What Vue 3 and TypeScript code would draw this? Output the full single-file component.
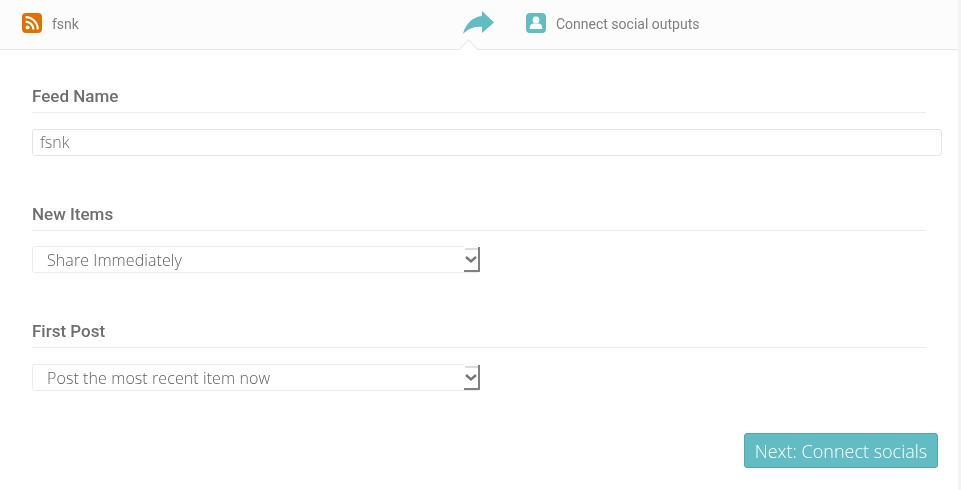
<script setup lang="ts">
import { ref } from 'vue'

const feedName = ref('fsnk')
const newItems = ref('Share Immediately')
const firstPost = ref('Post the most recent item now')
</script>

<template>
  <div class="page">
    <header class="steps">
      <div class="step step-source">
        <span class="badge badge-orange">
          <svg width="20" height="20" viewBox="0 0 20 20">
            <circle cx="5.6" cy="14.4" r="2" fill="#fff" />
            <path d="M3.6 8.600a7.800 7.800 0 0 1 7.800 7.800" fill="none" stroke="#fff" stroke-width="2.2" />
            <path d="M3.600 4.200a12.200 12.200 0 0 1 12.200 12.200" fill="none" stroke="#fff" stroke-width="2.2" />
          </svg>
        </span>
        <span class="step-text">fsnk</span>
      </div>
      <div class="arrow">
        <svg width="32" height="24" viewBox="0 0 32 24">
          <path d="M0 23C3 12 10 6 19 5V0l12 11.500L19 22v-6C11 15 5 18 0 23z" fill="#62bcc3" />
        </svg>
      </div>
      <div class="step step-target">
        <span class="badge badge-teal">
          <svg width="20" height="20" viewBox="0 0 20 20">
            <circle cx="10" cy="7" r="3.400" fill="#fff" />
            <path d="M3.800 16v-1.600c0-2.400 2-3.900 3.800-3.900h4.800c1.800 0 3.800 1.500 3.800 3.900V16z" fill="#fff" />
          </svg>
        </span>
        <span class="step-text">Connect social outputs</span>
      </div>
    </header>

    <main class="form">
      <section class="field field-name">
        <h3 class="label">Feed Name</h3>
        <input v-model="feedName" class="text-input" type="text" />
      </section>

      <section class="field field-items">
        <h3 class="label">New Items</h3>
        <div class="select">
          <span class="select-value">{{ newItems }}</span>
          <span class="select-arrow">
            <svg width="16" height="26" viewBox="0 0 16 26">
              <path d="M1 3h13" fill="none" stroke="#dcdcdc" stroke-width="2" />
              <path d="M0 25h15V1" fill="none" stroke="#808080" stroke-width="2" />
              <path d="M2 11l5 4.500 5-4.500" fill="none" stroke="#777" stroke-width="2.400" />
            </svg>
          </span>
        </div>
      </section>

      <section class="field field-post">
        <h3 class="label">First Post</h3>
        <div class="select">
          <span class="select-value">{{ firstPost }}</span>
          <span class="select-arrow">
            <svg width="16" height="26" viewBox="0 0 16 26">
              <path d="M1 3h13" fill="none" stroke="#dcdcdc" stroke-width="2" />
              <path d="M0 25h15V1" fill="none" stroke="#808080" stroke-width="2" />
              <path d="M2 11l5 4.500 5-4.500" fill="none" stroke="#777" stroke-width="2.400" />
            </svg>
          </span>
        </div>
      </section>

      <div class="actions">
        <button class="btn-next">Next: Connect socials</button>
      </div>
    </main>
  </div>
</template>

<style>
html, body {
  margin: 0;
  background: #fff;
  overflow: hidden;
}
</style>

<style scoped>
.page {
  width: 958px;
  height: 490px;
  border-right: 3px solid #f5f2f0;
  font-family: Roboto, sans-serif;
  color: #757575;
  will-change: transform;
}

.steps {
  position: relative;
  height: 49px;
  display: flex;
  align-items: center;
  background: #fcfcfc;
  border-bottom: 1px solid #e6e4e3;
}

.step {
  display: flex;
  align-items: center;
  gap: 10px;
  margin-bottom: 3px;
}

.step-source {
  margin-left: 22px;
  width: 441px;
}

.step-target {
  margin-left: 31px;
}

.arrow {
  display: flex;
  margin-top: -3px;
}

/* little notch sitting on the header's bottom border */
.arrow::after {
  content: '';
  position: absolute;
  left: 461px;
  top: 42px;
  width: 14px;
  height: 14px;
  background: #fff;
  border-left: 1px solid #e8e4e0;
  border-top: 1px solid #e8e4e0;
  transform: rotate(45deg) scale(0.95);
}

.badge {
  width: 20px;
  height: 20px;
  border-radius: 4px;
  display: block;
  overflow: hidden;
}

.badge svg {
  display: block;
}

.badge-orange {
  background: #e07000;
}

.badge-teal {
  background: #62bcc3;
}

.step-text {
  padding-top: 2px;
  font-size: 14px;
  color: #808080;
}

.form {
  padding: 35px 32px 0;
}

.label {
  margin: 0;
  width: 894px;
  height: 28px;
  box-sizing: border-box;
  border-bottom: 1px solid #eeeceb;
  font-family: Roboto, sans-serif;
  font-size: 17px;
  line-height: 22px;
  font-weight: 500;
  color: #6e6e6e;
}

.field-items,
.field-post {
  margin-top: 47px;
}

.text-input {
  display: block;
  box-sizing: border-box;
  margin-top: 16px;
  width: 910px;
  height: 27px;
  padding: 0 7px 2px;
  border: 1px solid #e6e4e3;
  border-radius: 3px;
  outline: none;
  background: #fff;
  font-family: "Open Sans", sans-serif;
  font-weight: 300;
  font-size: 16px;
  color: #6a6a6a;
}

.select {
  position: relative;
  box-sizing: border-box;
  margin-top: 15px;
  width: 448px;
  height: 27px;
  padding-left: 14px;
  border: 1px solid #eeeceb;
  border-radius: 3px;
  font-family: "Open Sans", sans-serif;
  font-weight: 300;
  font-size: 16px;
  letter-spacing: 0.08px;
  line-height: 27px;
  color: #606060;
}

.field-post .select {
  margin-top: 16px;
}

.select-arrow {
  position: absolute;
  right: -1px;
  top: -1px;
  display: block;
  background: #fff;
}

.select-arrow svg {
  display: block;
}

.actions {
  display: flex;
  justify-content: flex-end;
  width: 906px;
  margin-top: 42px;
}

.btn-next {
  width: 194px;
  height: 35px;
  padding: 0;
  border: 1px solid #57a5ac;
  border-radius: 3px;
  background: #62bcc3;
  color: #fff;
  font-family: "Open Sans", sans-serif;
  font-weight: 300;
  font-size: 18px;
  cursor: pointer;
}
</style>
